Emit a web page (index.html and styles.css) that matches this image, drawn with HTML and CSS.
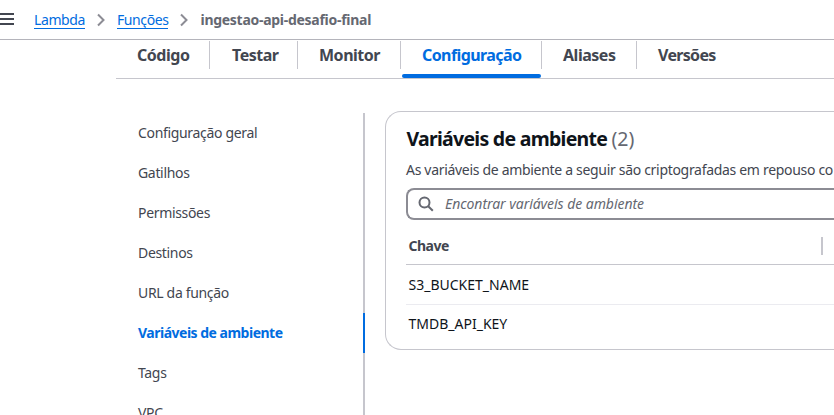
FILE: index.html
```html
<!DOCTYPE html>
<html lang="pt-BR">
<head>
<meta charset="utf-8">
<title>ingestao-api-desafio-final | Funções | Lambda</title>
<link rel="stylesheet" href="styles.css">
</head>
<body>
<header class="topbar">
  <svg class="menu-icon" viewBox="0 0 16 14" aria-hidden="true"><path d="M0 2h16M0 7h16M0 12h16"/></svg>
  <nav class="breadcrumbs">
    <a href="#">Lambda</a>
    <svg class="chevron" viewBox="0 0 8 14" aria-hidden="true"><path d="M1 1.5 6.5 7 1 12.5"/></svg>
    <a href="#">Funções</a>
    <svg class="chevron" viewBox="0 0 8 14" aria-hidden="true"><path d="M1 1.5 6.5 7 1 12.5"/></svg>
    <span class="current">ingestao-api-desafio-final</span>
  </nav>
</header>
<main class="page">
  <nav class="tabs">
    <a class="tab tab-code">Código</a>
    <a class="tab tab-test">Testar</a>
    <a class="tab tab-monitor">Monitor</a>
    <a class="tab tab-config active">Configuração</a>
    <a class="tab tab-alias">Aliases</a>
    <a class="tab tab-versions">Versões</a>
  </nav>
  <div class="content">
    <nav class="side">
      <a>Configuração geral</a>
      <a>Gatilhos</a>
      <a>Permissões</a>
      <a>Destinos</a>
      <a>URL da função</a>
      <a class="active">Variáveis de ambiente</a>
      <a>Tags</a>
      <a>VPC</a>
    </nav>
    <section class="panel">
      <h2>Variáveis de ambiente <span class="count">(2)</span></h2>
      <p class="desc">As variáveis de ambiente a seguir são criptografadas em repouso co</p>
      <div class="search">
        <svg viewBox="0 0 16 16" aria-hidden="true"><circle cx="6.5" cy="6.5" r="5"/><path d="m10.2 10.2 4.6 4.6"/></svg>
        <span class="placeholder">Encontrar variáveis de ambiente</span>
      </div>
      <div class="table">
        <div class="row head"><span>Chave</span><i class="resizer"></i></div>
        <div class="row">S3_BUCKET_NAME</div>
        <div class="row last">TMDB_API_KEY</div>
      </div>
    </section>
  </div>
</main>
</body>
</html>
```
FILE: styles.css
```css
* { box-sizing: border-box; }
body { margin: 0; width: 834px; height: 415px; overflow: hidden; background: #fff; color: #424650; font: 14px/20px "Noto Sans", sans-serif; white-space: nowrap; }
a { color: inherit; text-decoration: none; }
.topbar { height: 40px; display: flex; align-items: center; border-bottom: 1px solid #b4b4bb; }
.menu-icon { width: 16px; height: 14px; margin: -1px 0 0 -2px; stroke: #424650; stroke-width: 2; fill: none; }
.breadcrumbs { display: flex; align-items: center; margin-left: 20px; }
.breadcrumbs a { color: #006ce0; width: 51px; height: 19px; line-height: 19px; border-bottom: 1px solid #006ce0; letter-spacing: -0.4px; }
.chevron { width: 8px; height: 14px; margin: 0 12px; fill: none; stroke: #8c8c94; stroke-width: 2; }
.current { color: #656871; font-weight: 700; letter-spacing: -0.28px; line-height: 19px; margin: -1px 0 0 0.5px; }
.page { margin-left: 116px; }
.tabs { height: 39px; display: flex; border-bottom: 1px solid #c6c6cd; font-size: 16px; font-weight: 700; letter-spacing: -0.48px; }
.tab { position: relative; height: 28px; margin-top: 1px; padding: 4px 0 0 21px; border-right: 1px solid #c6c6cd; }
.tab-code { width: 94px; }
.tab-test { width: 88px; padding-left: 22px; }
.tab-monitor { width: 103px; }
.tab-config { width: 141px; letter-spacing: -0.58px; }
.tab-alias { width: 95px; }
.tab-versions { border: 0; letter-spacing: -0.68px; }
.tab.active { color: #006ce0; }
.tab.active::after { content: ""; position: absolute; left: 1px; right: 0; bottom: -9px; height: 4px; border-radius: 2px; background: #006ce0; }
.content { display: flex; padding-top: 34px; }
.side { width: 249px; height: 302px; border-right: 2px solid #c6c6cd; flex: none; letter-spacing: -0.33px; }
.side a { display: block; height: 40px; padding: 10px 0 0 22px; }
.side .active { color: #006ce0; font-weight: 700; letter-spacing: -0.5px; margin-right: -2px; border-right: 2px solid #006ce0; }
.panel { margin: -2px 0 0 20px; flex: 1; min-width: 0; height: 239px; border: 1px solid #c6c6cd; border-right: 0; border-radius: 16px 0 0 16px; padding: 15px 0 0 20px; }
h2 { margin: 0; padding-left: 0.5px; font-size: 19.5px; line-height: 24px; color: #0f141a; letter-spacing: -0.73px; }
.count { color: #656871; font-weight: 400; letter-spacing: 0; }
.desc { margin: 9px 0 0; letter-spacing: -0.31px; }
.search { display: flex; align-items: center; height: 32px; margin-top: 8px; border: 2px solid #8c8c94; border-right: 0; border-radius: 8px 0 0 8px; padding-left: 10px; }
.search svg { width: 16px; height: 16px; margin-right: 11px; fill: none; stroke: #656871; stroke-width: 2; }
.placeholder { color: #656871; font-style: italic; letter-spacing: -0.05px; }
.row { position: relative; display: flex; align-items: center; height: 40px; padding-left: 2.5px; color: #0f141a; border-bottom: 1px solid #ebebf0; }
.head { height: 45px; padding-top: 8px; border-color: #c6c6cd; color: #424650; font-weight: 700; letter-spacing: -0.5px; }
.last { border: 0; height: 38px; }
.resizer { width: 2px; height: 18px; background: #c6c6cd; position: absolute; left: 415px; top: 17px; }
```
